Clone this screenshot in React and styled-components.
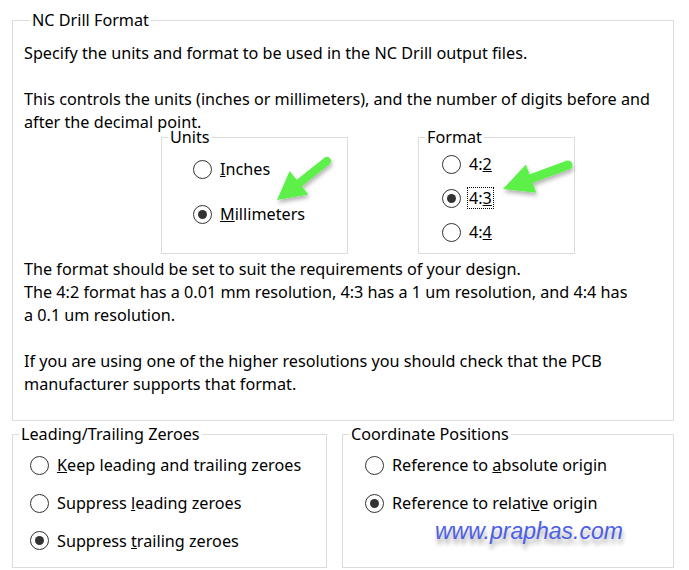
import React from 'react'
import styled, { createGlobalStyle } from 'styled-components'

const GlobalStyle = createGlobalStyle`
  body {
    margin: 0;
    background: #fff;
    color: #000;
    font-family: "Noto Sans", "Open Sans", sans-serif;
    font-size: 16.2px;
  }
`

const Page = styled.div`
  position: relative;
  width: 689px;
  height: 570px;
  padding: 10px 0 0 12px;
  box-sizing: border-box;
  overflow: hidden;
`

const Group = styled.fieldset`
  margin: 0;
  min-width: 0;
  box-sizing: border-box;
  border: 1px solid #dcdcdc;
  width: ${(p) => p.$w}px;
  height: ${(p) => (p.$h ? `${p.$h}px` : 'auto')};
  padding: ${(p) => p.$pad || '0'};
`

const Legend = styled.legend`
  margin-left: 6px;
  padding: 0 2px;
  line-height: 20px;
  font-size: 16.2px;
`

const Line = styled.div`
  line-height: 23px;
  white-space: nowrap;
  margin-top: ${(p) => (p.$gap ? '23px' : '0')};
`

const OptionsRow = styled.div`
  display: flex;
  gap: 70px;
  margin: -7px 0 4px 137px;
`

const RadioList = styled.div`
  display: flex;
  flex-direction: column;
  gap: ${(p) => p.$gap || 0}px;
  padding: ${(p) => p.$pad};
`

const RadioRow = styled.label`
  display: flex;
  align-items: center;
  gap: 6px;
  height: ${(p) => p.$h}px;
  white-space: nowrap;
`

const Circle = styled.span`
  flex: none;
  width: 19px;
  height: 19px;
  box-sizing: border-box;
  border-radius: 50%;
  border: 1px solid #333;
  display: flex;
  align-items: center;
  justify-content: center;
  &::after {
    content: '';
    width: 9px;
    height: 9px;
    border-radius: 50%;
    background: ${(p) => (p.$on ? '#333' : 'transparent')};
  }
`

const Caption = styled.span`
  padding: 0 1px;
  border: 1px dotted ${(p) => (p.$focus ? '#000' : 'transparent')};
  line-height: 20px;
`

const BottomRow = styled.div`
  display: flex;
  gap: 15px;
  margin-top: 3px;
`

const Overlay = styled.svg`
  position: absolute;
  left: 0;
  top: 0;
  pointer-events: none;
`

const Watermark = styled.div`
  position: absolute;
  left: 435px;
  top: 517px;
  font-family: "Liberation Sans", Arial, sans-serif;
  font-style: italic;
  font-size: 23px;
  line-height: 28px;
  color: #4c5ee8;
  text-shadow: 1px 5px 4px rgba(0, 0, 0, 0.35);
`

const Radio = ({ on, focus, h, children }) => (
  <RadioRow $h={h}>
    <Circle $on={on} />
    <Caption $focus={focus}>{children}</Caption>
  </RadioRow>
)

const Arrow = ({ tail, base, head, width }) => (
  <g fill="#5cf048" stroke="#5cf048">
    <line x1={tail[0]} y1={tail[1]} x2={base[0]} y2={base[1]} strokeWidth={width} strokeLinecap="round" />
    <polygon points={head} stroke="none" />
  </g>
)

export default function App() {
  return (
    <>
      <GlobalStyle />
      <Page>
        <Group $w={662} $pad="12px 10px 24px 11px">
          <Legend>NC Drill Format</Legend>
          <Line>Specify the units and format to be used in the NC Drill output files.</Line>
          <Line $gap>This controls the units (inches or millimeters), and the number of digits before and</Line>
          <Line>after the decimal point.</Line>
          <OptionsRow>
            <Group $w={187} $h={127}>
              <Legend>Units</Legend>
              <RadioList $pad="5px 0 0 31px" $gap={11}>
                <Radio h={34}><u>I</u>nches</Radio>
                <Radio h={34} on><u>M</u>illimeters</Radio>
              </RadioList>
            </Group>
            <Group $w={157} $h={127}>
              <Legend>Format</Legend>
              <RadioList $pad="0 0 0 23px">
                <Radio h={34}>4:<u>2</u></Radio>
                <Radio h={34} on focus>4:<u>3</u></Radio>
                <Radio h={34}>4:<u>4</u></Radio>
              </RadioList>
            </Group>
          </OptionsRow>
          <Line>The format should be set to suit the requirements of your design.</Line>
          <Line>The 4:2 format has a 0.01 mm resolution, 4:3 has a 1 um resolution, and 4:4 has</Line>
          <Line>a 0.1 um resolution.</Line>
          <Line $gap>If you are using one of the higher resolutions you should check that the PCB</Line>
          <Line>manufacturer supports that format.</Line>
        </Group>
        <BottomRow>
          <Group $w={315} $h={144}>
            <Legend>Leading/Trailing Zeroes</Legend>
            <RadioList $pad="2px 0 0 17px">
              <Radio h={38}><u>K</u>eep leading and trailing zeroes</Radio>
              <Radio h={38}>Suppress <u>l</u>eading zeroes</Radio>
              <Radio h={37} on>Suppress <u>t</u>railing zeroes</Radio>
            </RadioList>
          </Group>
          <Group $w={332} $h={144}>
            <Legend>Coordinate Positions</Legend>
            <RadioList $pad="2px 0 0 22px">
              <Radio h={38}>Reference to <u>a</u>bsolute origin</Radio>
              <Radio h={38} on>Reference to relati<u>v</u>e origin</Radio>
            </RadioList>
          </Group>
        </BottomRow>
        <Overlay width="689" height="570" viewBox="0 0 689 570">
          <defs>
            <filter id="shade" x="-20%" y="-20%" width="150%" height="160%">
              <feDropShadow dx="1" dy="3" stdDeviation="2" floodColor="#000" floodOpacity="0.3" />
            </filter>
          </defs>
          <g filter="url(#shade)">
            <Arrow tail={[327, 161]} base={[298, 184]} width={8} head="277,200 308.3,194.5 289.7,170.9" />
            <Arrow tail={[568, 165]} base={[530, 179]} width={9} head="503,189 536.3,192.7 525.9,164.5" />
          </g>
        </Overlay>
        <Watermark>www.praphas.com</Watermark>
      </Page>
    </>
  )
}
